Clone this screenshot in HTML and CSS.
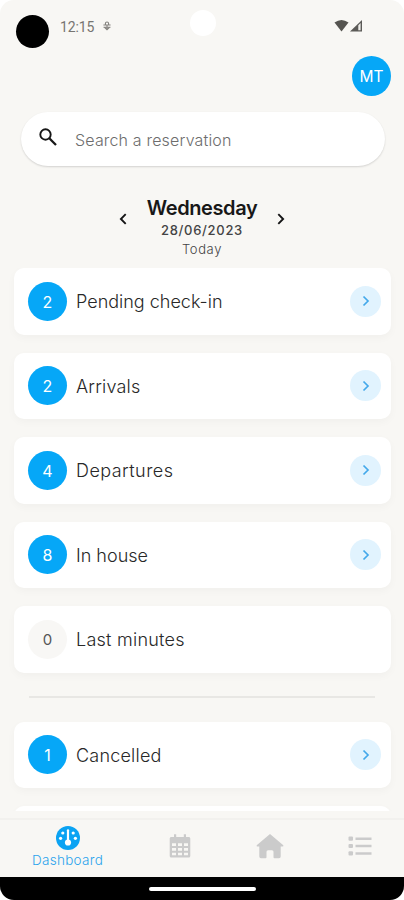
FILE: index.html
```html
<!DOCTYPE html>
<html lang="en">
<head>
<meta charset="utf-8">
<title>Dashboard</title>
<link rel="stylesheet" href="styles.css">
</head>
<body>
<div class="screen">
  <header class="status">
    <span class="camera"></span>
    <span class="clock">12:15</span>
    <svg class="debug" width="8" height="10" viewBox="0 0 8 10"><path d="M2.400 3.400V2.600a1.600 1.600 0 0 1 3.200 0v.8M.4 4h7.200M1.500 6.400 4 8.800l2.500-2.400M4 4v4.500M.5 6.300h7" fill="none" stroke="#85837f" stroke-width="1.100"/></svg>
    <span class="dot"></span>
    <svg class="signal" width="30" height="14" viewBox="0 0 30 14"><path d="M.5 3.600Q7.500-1.800 14.500 3.600L7.500 12.500Z" fill="#555450"/><path d="M16 12.500 28 1v11.500Z" fill="#5b5a57"/><path d="M24.300 6.200 26.600 4v7.300h-2.300Z" fill="#f0efeb"/></svg>
  </header>
  <div class="profile"><span class="avatar">MT</span></div>
  <div class="search">
    <svg width="18" height="18" viewBox="0 0 18 18" fill="none" stroke="#171717" stroke-width="1.900"><circle cx="6.500" cy="6.500" r="5.200"/><path d="m10.300 10.300 6.700 6.700" stroke-width="2.300"/></svg>
    <span>Search a reservation</span>
  </div>
  <div class="date">
    <svg width="8" height="12" viewBox="0 0 8 12"><path d="M6.700 1.200 1.900 6l4.800 4.800" fill="none" stroke="#151515" stroke-width="1.900"/></svg>
    <div class="day"><h1>Wednesday</h1><b>28/06/2023</b><small>Today</small></div>
    <svg width="8" height="12" viewBox="0 0 8 12"><path d="M1.300 1.200 6.100 6l-4.800 4.800" fill="none" stroke="#151515" stroke-width="1.900"/></svg>
  </div>
  <main class="list">
    <div class="card"><span class="count">2</span><span class="label pending">Pending check-in</span><span class="go"><svg width="8" height="12" viewBox="0 0 8 12"><path d="m1.500 1.500 4.500 4.500-4.500 4.500"/></svg></span></div>
    <div class="card"><span class="count">2</span><span class="label arrivals">Arrivals</span><span class="go"><svg width="8" height="12" viewBox="0 0 8 12"><path d="m1.500 1.500 4.500 4.500-4.500 4.500"/></svg></span></div>
    <div class="card"><span class="count">4</span><span class="label departures">Departures</span><span class="go"><svg width="8" height="12" viewBox="0 0 8 12"><path d="m1.500 1.500 4.500 4.500-4.500 4.500"/></svg></span></div>
    <div class="card"><span class="count">8</span><span class="label house">In house</span><span class="go"><svg width="8" height="12" viewBox="0 0 8 12"><path d="m1.500 1.500 4.500 4.500-4.500 4.500"/></svg></span></div>
    <div class="card"><span class="count empty">0</span><span class="label minutes">Last minutes</span></div>
    <hr>
    <div class="card"><span class="count">1</span><span class="label cancelled">Cancelled</span><span class="go"><svg width="8" height="12" viewBox="0 0 8 12"><path d="m1.500 1.500 4.500 4.500-4.500 4.500"/></svg></span></div>
    <div class="card"></div>
  </main>
  <nav class="tabs">
    <div class="tab active">
      <svg width="24" height="24" viewBox="0 0 24 24"><circle cx="12" cy="12" r="12" fill="#0ba3f3"/><g fill="#fff"><circle cx="4.600" cy="12.300" r="1.600"/><circle cx="19.400" cy="12.300" r="1.600"/><circle cx="6.800" cy="7" r="1.600"/><circle cx="17.200" cy="7" r="1.600"/><rect x="10.900" y="3.200" width="2.200" height="13" rx="1.100"/><circle cx="12" cy="16.500" r="3.100"/></g></svg>
      <span>Dashboard</span>
    </div>
    <div class="tab"><svg width="22" height="24" viewBox="0 0 22 24"><path d="M2 3h18q1.300 0 1.300 1.500V22q0 1.600-1.600 1.600H2.300Q.7 23.600.7 22V4.500Q.7 3 2 3ZM5 .3h2.200V4H5ZM14.800.3H17V4h-2.200Z" fill="#cbcbcb"/><path d="M3 9.300h4v2.800H3Zm6 0h4v2.800H9Zm6 0h4v2.800h-4ZM3 14h4v2.800H3Zm6 0h4v2.800H9Zm6 0h4v2.800h-4ZM3 18.700h4v2.500H3Zm6 0h4v2.500H9Zm6 0h4v2.500h-4Z" fill="#f8f7f4"/></svg></div>
    <div class="tab"><svg width="28" height="26" viewBox="0 0 28 26"><path d="M14 1 .7 12.200q-.5 1.300.8 1.300H3.300v10q0 1.700 1.700 1.700h4.500q1 0 1-1v-5.400q0-1.500 1.500-1.500h4q1.500 0 1.500 1.500v5.400q0 1 1 1H23q1.700 0 1.700-1.700v-10h1.800q1.300 0 .8-1.300Z" fill="#cbcbcb"/></svg></div>
    <div class="tab"><svg width="24" height="20" viewBox="0 0 24 20" fill="#cbcbcb"><rect x=".5" y=".5" width="4.500" height="4.200" rx="1"/><rect x=".5" y="7.900" width="4.500" height="4.200" rx="1"/><rect x=".5" y="15.300" width="4.500" height="4.200" rx="1"/><path d="M7.500 1.400h16v2.500h-16ZM7.500 8.800h16v2.500h-16ZM7.500 16.200h16v2.500h-16Z"/></svg></div>
  </nav>
  <footer class="gesture"><span></span></footer>
</div>
</body>
</html>
```
FILE: styles.css
```css
* { box-sizing: border-box; }
body { margin: 0; background: #fff; font-family: Inter, "Liberation Sans", sans-serif; }
svg { display: block; flex: none; }
.screen { width: 404px; height: 900px; display: flex; flex-direction: column; overflow: hidden; border-radius: 14px; background: #f8f7f4; }
.status { height: 56px; flex: none; display: flex; align-items: flex-start; padding: 0 16px; }
.camera { width: 33px; height: 33px; margin-top: 15px; border-radius: 50%; background: #000; }
.clock { margin: 19px 0 0 11px; width: 35px; font: 14px/16px Roboto, sans-serif; color: #777571; letter-spacing: -.1px; }
.debug { margin: 21px 0 0 8px; }
.dot { width: 26px; height: 26px; margin: 10px 0 0 79px; border-radius: 50%; background: #fff; }
.signal { margin: 19px 0 0 118px; }
.profile { height: 40px; flex: none; display: flex; justify-content: flex-end; padding-right: 13px; }
.avatar { width: 39px; height: 40px; border-radius: 50%; background: #06a7f7; color: #fff; font-size: 15.5px; line-height: 41px; text-align: center; }
.search { height: 54px; flex: none; margin: 16px 19px 0 21px; padding-left: 18px; display: flex; align-items: center; border-radius: 27px; background: #fff; box-shadow: 0 1px 2px #00000026; }
.search svg { margin-top: -4px; }
.search span { margin-left: 18px; padding-top: 2px; font-size: 16px; font-weight: 300; color: #6d6d6d; letter-spacing: .17px; }
.date { height: 102px; flex: none; display: flex; justify-content: center; padding-top: 31px; gap: 20px; }
.date > svg { margin-top: 16px; }
.day { width: 110px; display: flex; flex-direction: column; align-items: center; white-space: nowrap; }
.day h1 { margin: 0; font-size: 20px; line-height: 23px; font-weight: 600; color: #181818; letter-spacing: -.4px; }
.day b { font-size: 13px; line-height: 20px; font-weight: 500; color: #444; letter-spacing: .7px; }
.day small { font-size: 13px; line-height: 19px; font-weight: 300; color: #444; letter-spacing: .6px; }
.list { height: 543px; flex: none; overflow: hidden; display: flex; flex-direction: column; gap: 18px; padding: 0 13px 0 14px; }
.card { height: 66.5px; flex: none; display: flex; align-items: center; padding: 0 10px 0 14px; border-radius: 10px; background: #fff; box-shadow: 0 3px 8px #00000008; }
.count { width: 39px; height: 39px; border-radius: 50%; background: #06a7f7; color: #fff; font-size: 16px; line-height: 40px; text-align: center; }
.empty { background: #f8f7f5; color: #555; font-size: 15px; }
.label { margin-left: 9px; padding-top: 1px; font-size: 18px; font-weight: 300; color: #282828; white-space: nowrap; }
.arrivals { letter-spacing: .2px; }
.departures { letter-spacing: .45px; }
.minutes { letter-spacing: .25px; }
.cancelled { letter-spacing: .2px; }
.go { width: 31px; height: 31px; margin-left: auto; border-radius: 50%; background: #e1f3fe; display: flex; align-items: center; justify-content: center; }
.go path { fill: none; stroke: #43a8ea; stroke-width: 1.7; }
hr { width: 346px; height: 2px; flex: none; margin: 5px 0 6px 15px; border: 0; background: #e8e7e4; }
.tabs { height: 59px; flex: none; margin-top: 7px; display: grid; grid-template-columns: 135px 90px 90px 89px; background: #f8f7f4; border-top: 2px solid #f2f1ee; }
.tab { display: flex; flex-direction: column; align-items: center; justify-content: center; padding-bottom: 5px; }
.active { justify-content: flex-start; padding-top: 6px; }
.active span { font-size: 13.5px; line-height: 20px; font-weight: 300; color: #2ca4ed; letter-spacing: .3px; }
.gesture { height: 23px; flex: none; display: flex; align-items: center; justify-content: center; background: #000; }
.gesture span { width: 107px; height: 4px; border-radius: 2px; background: #fff; }
```
